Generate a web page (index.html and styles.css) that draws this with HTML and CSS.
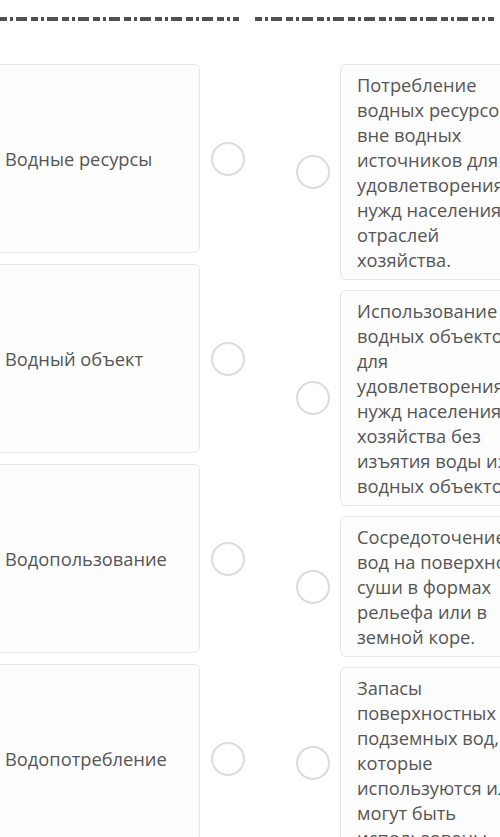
FILE: index.html
```html
<!DOCTYPE html>
<html>
<head>
<meta charset="utf-8">
<title>Установите соответствие</title>
<link rel="stylesheet" href="styles.css">
</head>
<body>

<div class="rule">
  <span class="rule-part"></span>
  <span class="rule-part"></span>
</div>

<div class="board">
  <div class="col col-left">
    <div class="item">
      <div class="card term">Водные ресурсы</div>
      <span class="radio"></span>
    </div>
    <div class="item">
      <div class="card term">Водный объект</div>
      <span class="radio"></span>
    </div>
    <div class="item">
      <div class="card term">Водопользование</div>
      <span class="radio"></span>
    </div>
    <div class="item">
      <div class="card term">Водопотребление</div>
      <span class="radio"></span>
    </div>
  </div>

  <div class="col col-right">
    <div class="item">
      <span class="radio"></span>
      <div class="card def">Потребление<br>водных ресурсов<br>вне водных<br>источников для<br>удовлетворения<br>нужд населения и<br>отраслей<br>хозяйства.</div>
    </div>
    <div class="item">
      <span class="radio"></span>
      <div class="card def">Использование<br>водных объектов<br>для<br>удовлетворения<br>нужд населения и<br>хозяйства без<br>изъятия воды из<br>водных объектов.</div>
    </div>
    <div class="item">
      <span class="radio"></span>
      <div class="card def">Сосредоточение<br>вод на поверхности<br>суши в формах<br>рельефа или в<br>земной коре.</div>
    </div>
    <div class="item">
      <span class="radio"></span>
      <div class="card def">Запасы<br>поверхностных и<br>подземных вод,<br>которые<br>используются или<br>могут быть<br>использованы.</div>
    </div>
  </div>
</div>

</body>
</html>
```

FILE: styles.css
```css
body {
  margin: 0;
  background-color: #fff;
  font-family: "Open Sans", "Noto Sans", sans-serif;
  color: #555;
  overflow: hidden;
}

/* broken line along the top edge */
.rule {
  display: flex;
  gap: 16px;
  padding: 17px 6px 0 0;
  height: 29px;
}

.rule-part {
  flex: 1;
  height: 4px;
  background: repeating-linear-gradient(90deg,
    #505050 0 7px, transparent 7px 10px,
    #505050 10px 13px, transparent 13px 16px,
    #505050 16px 27px, transparent 27px 31px);
}

.board {
  display: flex;
  align-items: flex-start;
  gap: 51px;
  margin-left: -12px;
  padding-top: 18px;
}

.col {
  display: flex;
  flex-direction: column;
}

.col-left {
  gap: 11px;
}

.col-right {
  gap: 10px;
}

.item {
  display: flex;
  align-items: center;
  gap: 11px;
}

.col-right .item {
  gap: 10px;
}

.card {
  box-sizing: border-box;
  background-color: #fdfdfd;
  border: 1px solid #e6e6e6;
  border-radius: 6px;
  font-size: 18.3px;
  line-height: 25px;
}

.term {
  width: 212px;
  height: 189px;
  padding: 0 16px;
  display: flex;
  align-items: center;
}

.def {
  width: 200px;
  flex-shrink: 0;
  padding: 7px 16px;
  white-space: nowrap;
}

.radio {
  flex-shrink: 0;
  box-sizing: border-box;
  width: 34px;
  height: 34px;
  border: 2.5px solid #dcdcdc;
  border-radius: 50%;
  background-color: #fff;
}
```
